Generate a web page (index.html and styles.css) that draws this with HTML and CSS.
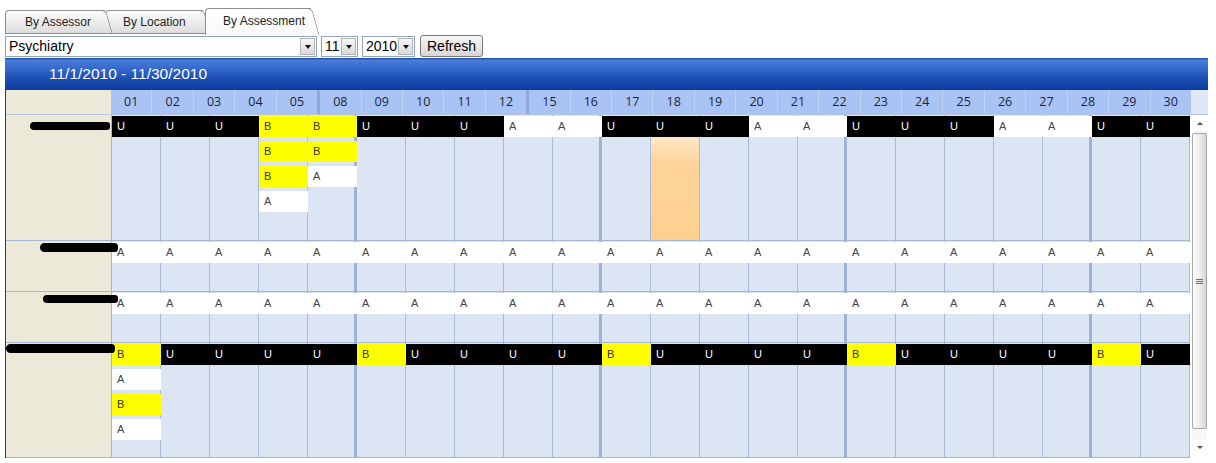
FILE: index.html
```html
<!DOCTYPE html>
<html lang="en">
<head>
    <meta charset="UTF-8">
    <title>Assessment Schedule</title>
    <link rel="stylesheet" href="styles.css">
</head>
<body>
    <div class="tabs">
        <div class="tab first">By Assessor</div>
        <div class="tab second">By Location</div>
        <div class="tab active">By Assessment</div>
    </div>

    <div class="filters">
        <div class="combo combo-wide">
            <span class="combo-text">Psychiatry</span>
            <span class="combo-arrow"></span>
        </div>
        <div class="combo combo-month">
            <span class="combo-text">11</span>
            <span class="combo-arrow"></span>
        </div>
        <div class="combo combo-year">
            <span class="combo-text">2010</span>
            <span class="combo-arrow"></span>
        </div>
        <button class="refresh" type="button">Refresh</button>
    </div>

    <div class="panel">
        <div class="title">11/1/2010 - 11/30/2010</div>

        <div class="grid">
            <div class="grid-head">
                <div class="corner"></div>
                <div class="days">
                    <div class="day">01</div>
                    <div class="day">02</div>
                    <div class="day">03</div>
                    <div class="day">04</div>
                    <div class="day wk">05</div>
                    <div class="day">08</div>
                    <div class="day">09</div>
                    <div class="day">10</div>
                    <div class="day">11</div>
                    <div class="day wk">12</div>
                    <div class="day">15</div>
                    <div class="day">16</div>
                    <div class="day">17</div>
                    <div class="day">18</div>
                    <div class="day">19</div>
                    <div class="day">20</div>
                    <div class="day">21</div>
                    <div class="day">22</div>
                    <div class="day">23</div>
                    <div class="day">24</div>
                    <div class="day">25</div>
                    <div class="day">26</div>
                    <div class="day">27</div>
                    <div class="day">28</div>
                    <div class="day">29</div>
                    <div class="day last">30</div>
                </div>
                <div class="head-fill"></div>
            </div>

            <div class="grid-body">
                <div class="groups">
                    <!-- assessor 1 -->
                    <div class="group g1">
                        <div class="label"><span class="redact r1"></span></div>
                        <div class="lane lane-g1">
                            <div class="cell u">U</div><div class="cell u">U</div><div class="cell u">U</div><div class="cell b">B</div><div class="cell b">B</div>
                            <div class="cell u">U</div><div class="cell u">U</div><div class="cell u">U</div><div class="cell a">A</div><div class="cell a">A</div>
                            <div class="cell u">U</div><div class="cell u">U</div><div class="cell u">U</div><div class="cell a">A</div><div class="cell a">A</div>
                            <div class="cell u">U</div><div class="cell u">U</div><div class="cell u">U</div><div class="cell a">A</div><div class="cell a">A</div>
                            <div class="cell u">U</div><div class="cell u">U</div>

                            <div class="cell b row2 col4">B</div>
                            <div class="cell b row2 col5">B</div>
                            <div class="cell b row3 col4">B</div>
                            <div class="cell a row3 col5">A</div>
                            <div class="cell a row4 col4">A</div>
                            <div class="today col12"></div>
                        </div>
                    </div>

                    <!-- assessor 2 -->
                    <div class="group g2">
                        <div class="label"><span class="redact r2"></span></div>
                        <div class="lane">
                            <div class="cell a">A</div><div class="cell a">A</div><div class="cell a">A</div><div class="cell a">A</div><div class="cell a">A</div>
                            <div class="cell a">A</div><div class="cell a">A</div><div class="cell a">A</div><div class="cell a">A</div><div class="cell a">A</div>
                            <div class="cell a">A</div><div class="cell a">A</div><div class="cell a">A</div><div class="cell a">A</div><div class="cell a">A</div>
                            <div class="cell a">A</div><div class="cell a">A</div><div class="cell a">A</div><div class="cell a">A</div><div class="cell a">A</div>
                            <div class="cell a">A</div><div class="cell a">A</div>
                        </div>
                    </div>

                    <!-- assessor 3 -->
                    <div class="group g3">
                        <div class="label"><span class="redact r3"></span></div>
                        <div class="lane">
                            <div class="cell a">A</div><div class="cell a">A</div><div class="cell a">A</div><div class="cell a">A</div><div class="cell a">A</div>
                            <div class="cell a">A</div><div class="cell a">A</div><div class="cell a">A</div><div class="cell a">A</div><div class="cell a">A</div>
                            <div class="cell a">A</div><div class="cell a">A</div><div class="cell a">A</div><div class="cell a">A</div><div class="cell a">A</div>
                            <div class="cell a">A</div><div class="cell a">A</div><div class="cell a">A</div><div class="cell a">A</div><div class="cell a">A</div>
                            <div class="cell a">A</div><div class="cell a">A</div>
                        </div>
                    </div>

                    <!-- assessor 4 -->
                    <div class="group g4">
                        <div class="label"><span class="redact r4"></span></div>
                        <div class="lane">
                            <div class="cell b">B</div><div class="cell u">U</div><div class="cell u">U</div><div class="cell u">U</div><div class="cell u">U</div>
                            <div class="cell b">B</div><div class="cell u">U</div><div class="cell u">U</div><div class="cell u">U</div><div class="cell u">U</div>
                            <div class="cell b">B</div><div class="cell u">U</div><div class="cell u">U</div><div class="cell u">U</div><div class="cell u">U</div>
                            <div class="cell b">B</div><div class="cell u">U</div><div class="cell u">U</div><div class="cell u">U</div><div class="cell u">U</div>
                            <div class="cell b">B</div><div class="cell u">U</div>

                            <div class="cell a row2 col1">A</div>
                            <div class="cell b row3 col1">B</div>
                            <div class="cell a row4 col1">A</div>
                        </div>
                    </div>
                </div>

                <div class="vscroll">
                    <div class="sb-btn sb-up"></div>
                    <div class="sb-track">
                        <div class="sb-thumb"><span class="grip"></span></div>
                    </div>
                    <div class="sb-btn sb-down"></div>
                </div>
            </div>
        </div>
    </div>
</body>
</html>
```

FILE: styles.css
```css
body {
    margin: 0;
    font-family: "Liberation Sans", Arial, sans-serif;
    background-color: #fff;
    color: #000;
}

/* tab strip */
.tabs {
    display: flex;
    align-items: flex-end;
    height: 27px;
    padding: 8px 0 0 5px;
}
.tab {
    position: relative;
    height: 22px;
    line-height: 22px;
    width: 80px;
    padding-left: 19px;
    margin-bottom: 1px;
    border: 1px solid #8d9091;
    border-right: none;
    border-radius: 4px 0 0 0;
    background: linear-gradient(#fcfcfc, #ececec 50%, #dcdcdc);
    font-size: 12px;
    color: #1e1e1e;
    white-space: nowrap;
}
.tab::after {
    content: '';
    position: absolute;
    z-index: -1;
    top: -1px;
    bottom: -1px;
    right: -1px;
    width: 14px;
    border: 1px solid #8d9091;
    border-left: none;
    border-radius: 0 5px 0 0;
    background: inherit;
    transform: skewX(16deg);
    transform-origin: top left;
}
.tab.first {
    z-index: 3;
}
.tab.second {
    z-index: 2;
    padding-left: 17px;
}
.tab.active {
    z-index: 4;
    height: 26px;
    line-height: 24px;
    width: 88px;
    padding-left: 17px;
    margin: 0 0 0 2px;
    border-bottom: none;
    background: linear-gradient(#fff, #f8f8f8);
}
.tab.active::after {
    bottom: 0;
    border-bottom: none;
}

/* filter row */
.filters {
    display: flex;
    gap: 4px;
    height: 21px;
    margin-top: 1px;
    padding-left: 5px;
}
.combo {
    display: flex;
    box-sizing: border-box;
    height: 21px;
    border: 1px solid #8ea4c0;
    background-color: #fff;
    font-size: 14px;
    line-height: 19px;
}
.combo-wide {
    width: 312px;
}
.combo-month {
    width: 37px;
}
.combo-year {
    width: 53px;
}
.combo-text {
    flex: 1;
    padding-left: 3px;
}
.combo-arrow {
    display: flex;
    align-items: center;
    justify-content: center;
    width: 13px;
    height: 15px;
    margin: 1px;
    border: 1px solid #b3b3b3;
    background: linear-gradient(#f7f7f7, #dadada);
}
.combo-arrow::before {
    content: '';
    border-left: 3px solid transparent;
    border-right: 3px solid transparent;
    border-top: 4px solid #111;
}
.refresh {
    box-sizing: border-box;
    width: 63px;
    height: 22px;
    margin: -1px 0 0 1px;
    padding: 0;
    border: 1px solid #7a7a7a;
    border-radius: 3px;
    background: linear-gradient(#f6f6f6, #e8e8e8 50%, #d6d6d6);
    font-family: "Liberation Sans", Arial, sans-serif;
    font-size: 14px;
    color: #000;
}

/* schedule panel */
.panel {
    width: 1203px;
    margin: 1px 0 0 5px;
}
.title {
    height: 32px;
    line-height: 32px;
    padding-left: 44px;
    color: #fff;
    font-size: 15.5px;
    background: linear-gradient(#1b45a5 0, #4a7dd8 7%, #3367cb 35%, #1c4fb3 65%, #0b3b9d 100%);
}
.grid {
    border-left: 1px solid #1d3b86;
}
.grid-head {
    display: flex;
    height: 24px;
    border-bottom: 1px solid #b6c4dc;
}
.corner {
    width: 105px;
    background-color: #ece9d8;
}
.days {
    display: flex;
    width: 1080px;
    background-color: #a9c4f4;
}
.day {
    flex: 1;
    box-sizing: border-box;
    border-right: 1px solid #c2d4f6;
    text-align: center;
    line-height: 24px;
    font-family: "Open Sans", "Liberation Sans", sans-serif;
    font-size: 12.5px;
    color: #1c1f3c;
}
.day.wk {
    border-right: 3px solid #91a9d6;
}
.day.last {
    border-right: none;
}
.head-fill {
    flex: 1;
    background-color: #dfe8f6;
}

.grid-body {
    display: flex;
}
.groups {
    width: 1184px;
}
.group {
    display: flex;
    box-sizing: border-box;
    border-bottom: 1px solid #a4b6d4;
}
.g1 {
    height: 126px;
}
.g2, .g3 {
    height: 51px;
}
.g4 {
    height: 115px;
}
.label {
    position: relative;
    z-index: 1;
    display: flex;
    justify-content: flex-end;
    align-items: flex-start;
    box-sizing: border-box;
    width: 106px;
    background-color: #ece9d8;
    border-right: 1px solid #a4b6d4;
}

/* redacted names */
.redact {
    display: block;
    height: 8px;
    background-color: #000;
    border-radius: 5px 4px 4px 5px;
}
.r1 {
    width: 80px;
    margin: 7px 1px 0 0;
}
.r2 {
    width: 78px;
    height: 9px;
    margin: 2px -7px 0 0;
}
.r3 {
    width: 75px;
    margin: 3px -7px 0 0;
}
.r4 {
    width: 116px;
    height: 9px;
    margin: 1px -4px 0 0;
}

.lane {
    display: grid;
    grid-template-columns: repeat(22, 49px);
    grid-auto-rows: 21px;
    row-gap: 4px;
    align-content: start;
    width: 1078px;
    padding-top: 1px;
    background-color: #dbe5f4;
    background-image:
        repeating-linear-gradient(to right, transparent 0 242px, #9fb2d2 242px 245px),
        repeating-linear-gradient(to right, transparent 0 48px, #a9bbd7 48px 49px);
}
.lane-g1 {
    grid-template-rows: repeat(4, 21px) 1fr;
    align-content: stretch;
}
.cell {
    padding-left: 5px;
    font-size: 11px;
    line-height: 21px;
}
.cell.u {
    background-color: #000;
    color: #fff;
}
.cell.b {
    background-color: #ffff00;
    color: #333;
}
.cell.a {
    background-color: #fff;
    color: #444;
}
.row2 { grid-row: 2; }
.row3 { grid-row: 3; }
.row4 { grid-row: 4; }
.col1 { grid-column: 1; }
.col4 { grid-column: 4; }
.col5 { grid-column: 5; }
.col12 { grid-column: 12; }
.today {
    grid-row: 2 / 6;
    margin: -4px 1px 0 0;
    background: linear-gradient(#ffe8c8, #fdd49a 25%, #fdd08f);
}

/* vertical scrollbar */
.vscroll {
    display: flex;
    flex-direction: column;
    box-sizing: border-box;
    width: 18px;
    padding: 1px 1px 3px 2px;
    background-color: #fff;
}
.sb-btn {
    display: flex;
    align-items: center;
    justify-content: center;
    height: 15px;
}
.sb-up::before {
    content: '';
    border-left: 3px solid transparent;
    border-right: 3px solid transparent;
    border-bottom: 3px solid #555;
}
.sb-down::before {
    content: '';
    border-left: 3px solid transparent;
    border-right: 3px solid transparent;
    border-top: 3px solid #555;
}
.sb-track {
    flex: 1;
    padding: 2px 0 0;
    background-color: #f7f7f7;
}
.sb-thumb {
    display: flex;
    align-items: center;
    justify-content: center;
    box-sizing: border-box;
    height: 296px;
    border: 1px solid #a7a7a7;
    border-radius: 2px;
    background: linear-gradient(to right, #fdfdfd, #ececec 55%, #d5d5d5);
}
.grip {
    width: 7px;
    height: 5px;
    background: repeating-linear-gradient(#6d6d6d 0 1px, transparent 1px 2px);
}
```
